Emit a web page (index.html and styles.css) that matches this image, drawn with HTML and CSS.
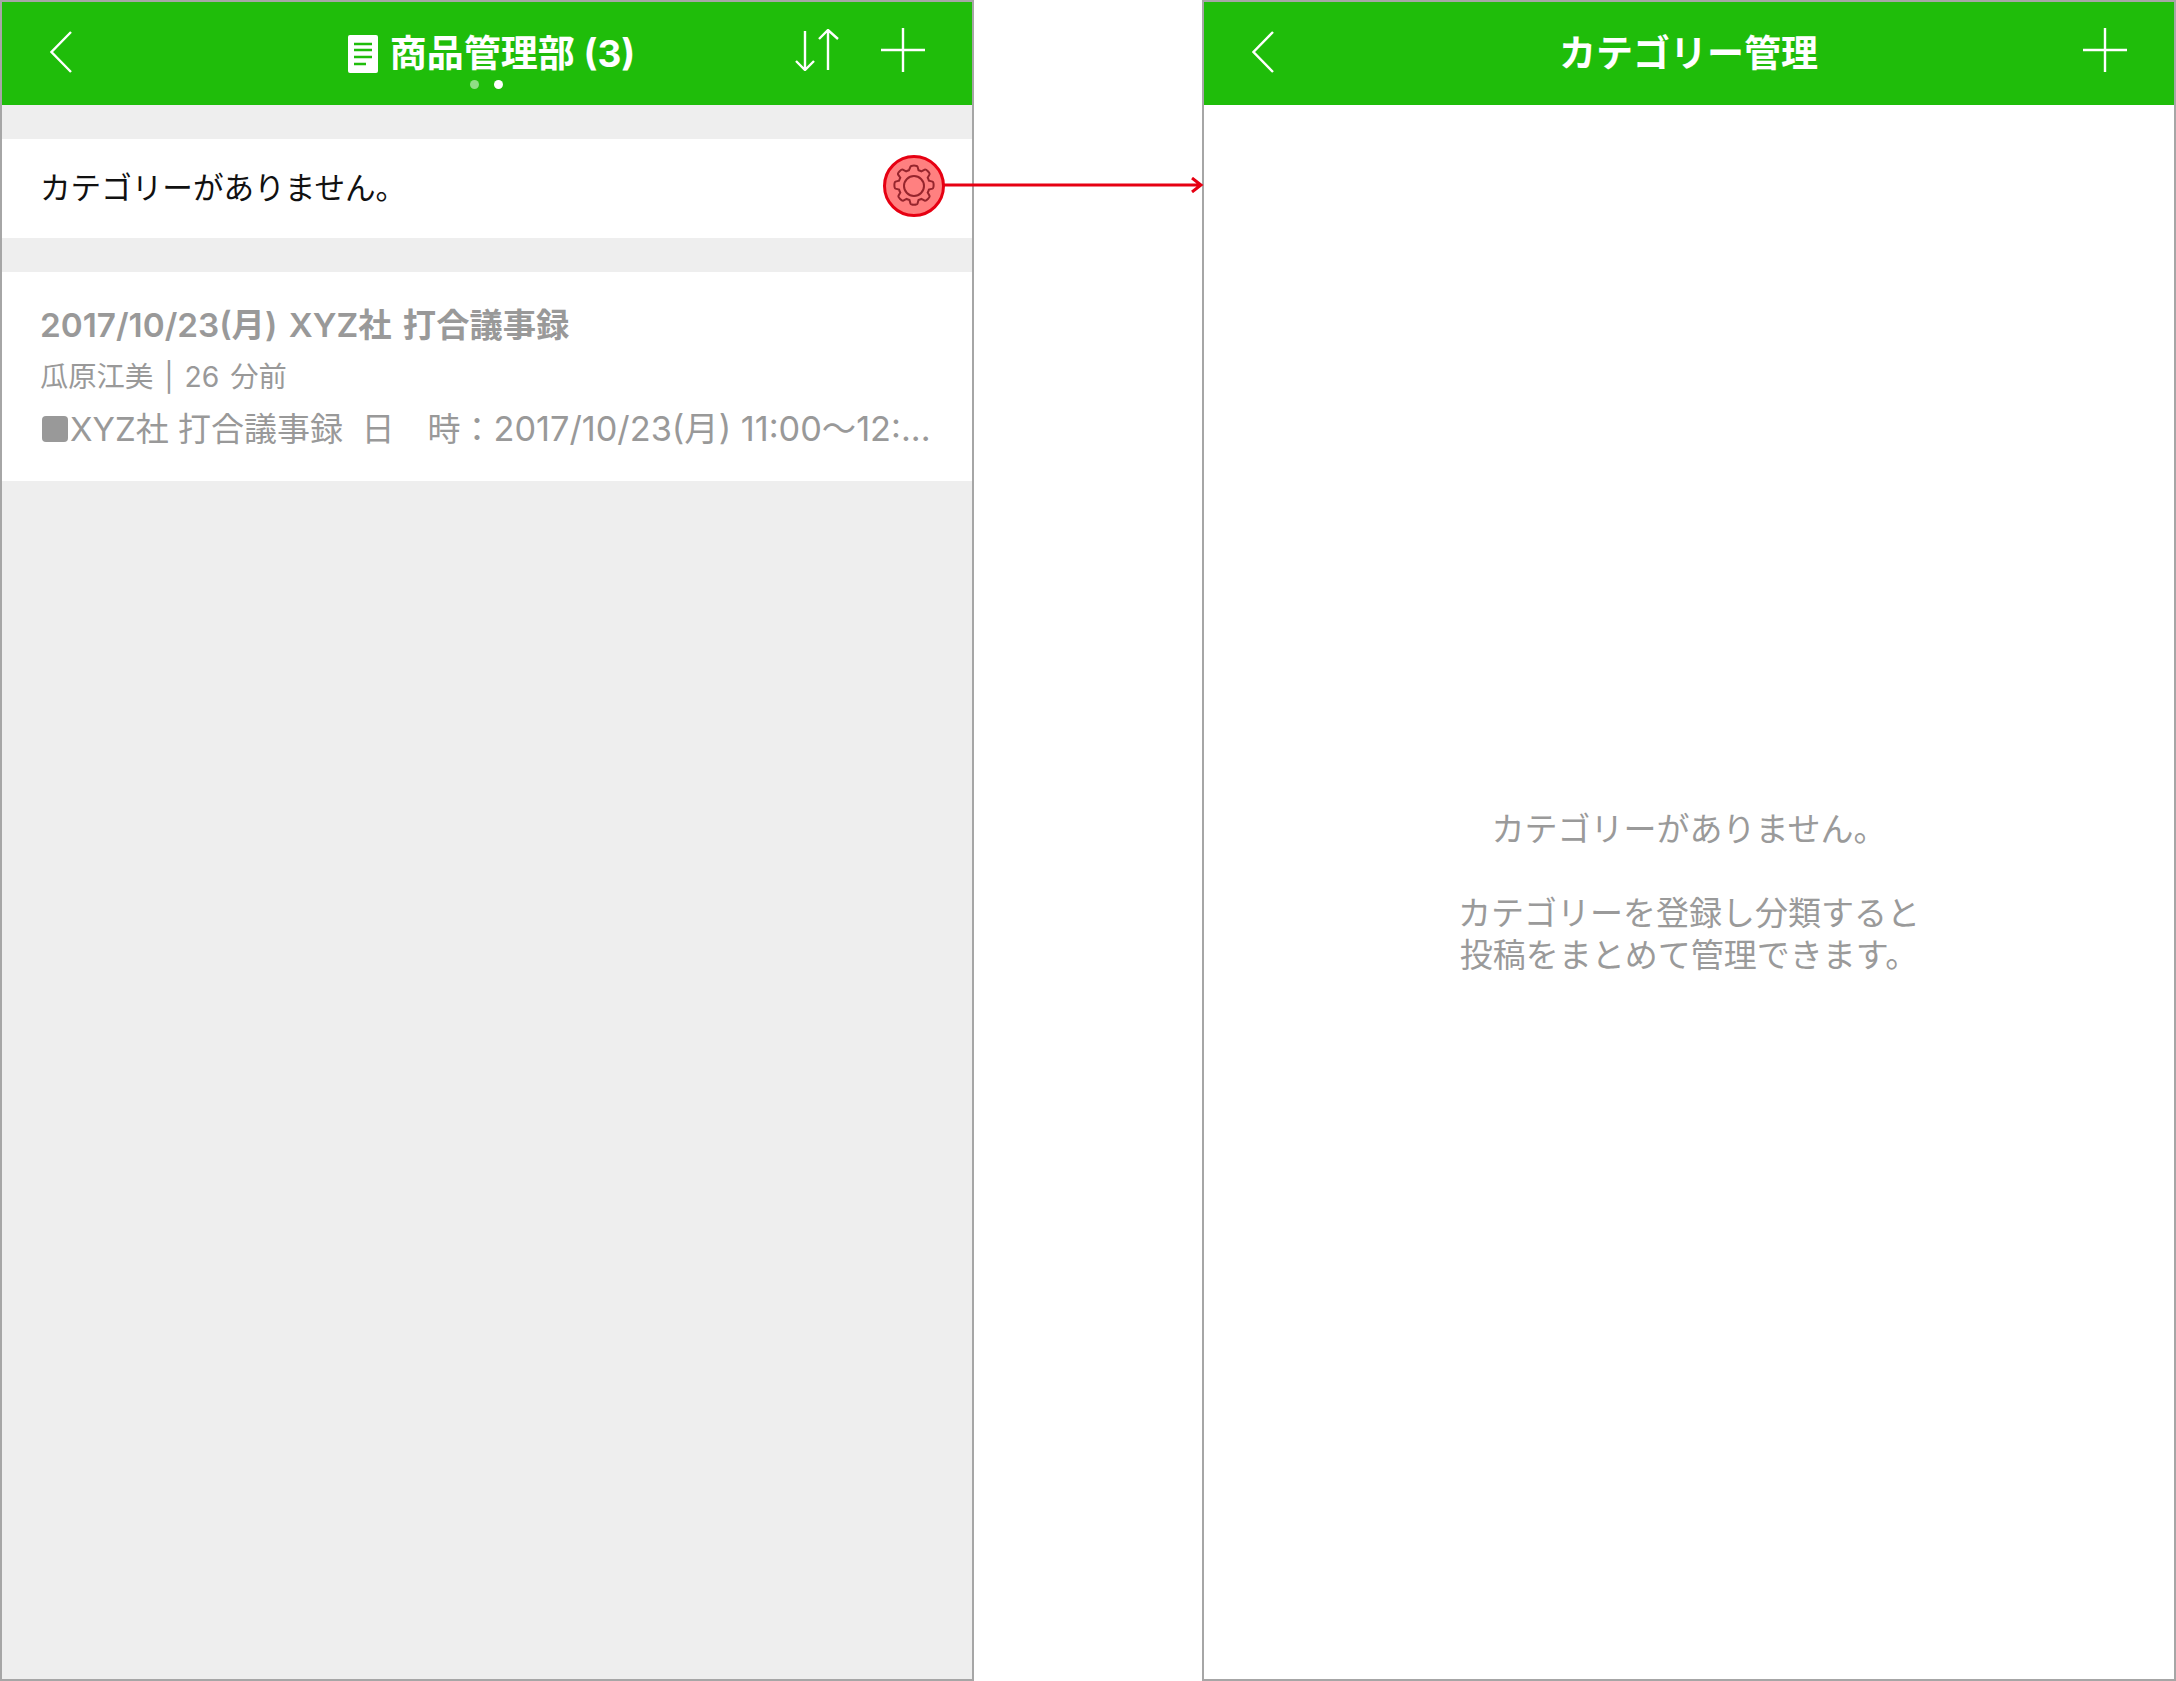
FILE: index.html
```html
<!DOCTYPE html>
<html lang="ja">
<head>
<meta charset="utf-8">
<title>カテゴリー管理</title>
<link rel="stylesheet" href="styles.css">
</head>
<body>
<div class="stage">
  <section class="phone phone-list">
    <header class="bar">
      <svg class="ico back" viewBox="0 0 22 42"><path d="M21 1 1.500 21 21 41"/></svg>
      <div class="title-wrap">
        <h1 class="title">
          <svg class="note" viewBox="0 0 30 38"><rect width="30" height="38" rx="2" fill="#fff"/><path d="M6 9h18M6 15h18M6 22h18M6 29h12" stroke="#1fbd0a" stroke-width="2.4" fill="none"/></svg>
          <span>商品管理部 (3)</span>
        </h1>
        <div class="dots"><i class="dot dim"></i><i class="dot"></i></div>
      </div>
      <div class="actions">
        <svg class="ico sort" viewBox="0 0 44 42"><path d="M10 2v39M1 32l9 9 9-9M33 41V1M24 10l9-9 10 9"/></svg>
        <svg class="ico plus" viewBox="0 0 44 44"><path d="M22 0v44M0 22h44"/></svg>
      </div>
    </header>
    <div class="list-body">
      <div class="cat-row">
        <span class="cat-label">カテゴリーがありません。</span>
        <span class="gear-spot">
          <svg class="gear" viewBox="0 0 44 44">
            <path d="M18.5 2.6c.6-1.5 6.4-1.5 7 0l1 3.6c1 .3 2 .7 2.9 1.2l3.3-1.8c1.4-.7 5.500 3.400 4.800 4.800l-1.800 3.300c.5.900.900 1.900 1.200 2.900l3.600 1c1.500.600 1.500 6.400 0 7l-3.600 1c-.3 1-.7 2-1.200 2.900l1.800 3.300c.7 1.400-3.400 5.500-4.800 4.800l-3.300-1.800c-.9.5-1.900.9-2.900 1.200l-1 3.600c-.6 1.500-6.400 1.500-7 0l-1-3.600c-1-.3-2-.7-2.900-1.200l-3.300 1.800c-1.400.7-5.500-3.400-4.800-4.800l1.800-3.300c-.5-.9-.9-1.900-1.200-2.900l-3.600-1c-1.500-.6-1.500-6.400 0-7l3.600-1c.3-1 .7-2 1.200-2.900L6 10.400C5.300 9 9.400 4.900 10.800 5.600l3.300 1.800c.9-.5 1.900-.9 2.900-1.200z"/>
            <circle cx="22" cy="22" r="10"/>
          </svg>
        </span>
      </div>
      <article class="post">
        <h2 class="post-title">2017/10/23(月) XYZ社 打合議事録</h2>
        <p class="post-meta">瓜原江美 | 26 分前</p>
        <p class="post-text"><i class="square"></i><span>XYZ社 打合議事録&nbsp; 日&emsp;時：<span class="post-date">2017/10/23(月) 11:00～12:...</span></span></p>
      </article>
    </div>
  </section>

  <section class="phone phone-manage">
    <header class="bar">
      <svg class="ico back" viewBox="0 0 22 42"><path d="M21 1 1.500 21 21 41"/></svg>
      <div class="title-wrap"><h1 class="title">カテゴリー管理</h1></div>
      <div class="actions">
        <svg class="ico plus" viewBox="0 0 44 44"><path d="M22 0v44M0 22h44"/></svg>
      </div>
    </header>
    <div class="empty">
      <p class="empty-text">カテゴリーがありません。<br><br>カテゴリーを登録し分類すると<br>投稿をまとめて管理できます。</p>
    </div>
  </section>

  <svg class="arrow" viewBox="0 0 262 16"><path d="M0 8h258M250 1l9 7-9 7"/></svg>
</div>
</body>
</html>
```

FILE: styles.css
```css
* { box-sizing: border-box; }
html, body { margin: 0; padding: 0; background: #fff; }
body {
  font-family: Inter, "Noto Sans CJK JP", sans-serif;
}
.stage {
  position: relative;
  width: 2176px;
  height: 1681px;
  display: flex;
  justify-content: space-between;
}
.phone {
  width: 974px;
  height: 1681px;
  border: 2px solid #a6a6a6;
  display: flex;
  flex-direction: column;
  overflow: hidden;
  background: #fff;
}
.bar {
  flex: none;
  height: 103px;
  background: #1fbd0a;
  display: grid;
  grid-template-columns: 1fr auto 1fr;
  align-items: center;
  padding: 0 47px 0 48px;
  color: #fff;
}
.ico {
  fill: none;
  stroke: #fff;
  stroke-width: 2.4;
  flex: none;
  display: block;
}
.back {
  width: 22px;
  height: 42px;
  margin-bottom: 3px;
}
.actions {
  display: flex;
  justify-content: flex-end;
  align-items: center;
  gap: 42px;
  padding-bottom: 7px;
}
.sort {
  width: 44px;
  height: 42px;
}
.plus {
  width: 44px;
  height: 44px;
}
.title-wrap {
  display: flex;
  flex-direction: column;
  align-items: center;
  position: relative;
}
.phone-list .title-wrap { padding-left: 8px; }
.phone-manage .title-wrap { padding-right: 2px; }
.title {
  margin: 0;
  font-size: 37px;
  line-height: 46px;
  font-weight: 700;
  display: flex;
  align-items: center;
  gap: 12px;
  white-space: nowrap;
}
.note { width: 30px; height: 38px; flex: none; }
.dots {
  position: absolute;
  top: 49px;
  left: 0;
  right: 0;
  display: flex;
  justify-content: center;
  gap: 15px;
  padding-right: 2px;
}
.dot {
  width: 9px;
  height: 9px;
  border-radius: 50%;
  background: #fff;
}
.dot.dim { background: #8fde85; }
.list-body {
  flex: 1;
  background: #eeeeee;
  padding-top: 34px;
  display: flex;
  flex-direction: column;
  gap: 34px;
}
.cat-row {
  height: 99px;
  background: #fff;
  display: flex;
  align-items: center;
  justify-content: space-between;
  padding: 0 27px 0 38px;
  font-size: 30.6px;
  color: #111;
}
.cat-label { padding-bottom: 5px; }
.gear-spot {
  width: 62px;
  height: 62px;
  border-radius: 50%;
  background: #ff8080;
  border: 3px solid #e60012;
  display: flex;
  align-items: center;
  justify-content: center;
  margin-bottom: 6px;
}
.gear {
  width: 44px;
  height: 44px;
  fill: none;
  stroke: #96252d;
  stroke-width: 2;
}
.post {
  height: 209px;
  background: #fff;
  padding: 30px 38px 0;
  color: #999;
}
.post-title {
  margin: 0;
  font-size: 33.3px;
  line-height: 46px;
  font-weight: 600;
  word-spacing: 3px;
  white-space: nowrap;
}
.post-meta {
  margin: 11px 0 0;
  font-size: 28.3px;
  line-height: 36px;
  word-spacing: 3px;
  white-space: nowrap;
}
.post-text {
  margin: 13px 0 0;
  font-size: 33px;
  line-height: 42px;
  white-space: nowrap;
  display: flex;
  align-items: center;
}
.post-date { font-size: 34.3px; }
.square {
  width: 26px;
  height: 26px;
  border-radius: 4px;
  background: #999;
  margin: 0 2px;
  flex: none;
}
.empty {
  flex: 1;
  display: flex;
  align-items: center;
  justify-content: center;
}
.empty-text {
  margin: 0;
  font-size: 33px;
  line-height: 42px;
  color: #9a9a9a;
  text-align: center;
}
.arrow {
  position: absolute;
  left: 942px;
  top: 177px;
  width: 262px;
  height: 16px;
  fill: none;
  stroke: #e60012;
  stroke-width: 3;
}
```
